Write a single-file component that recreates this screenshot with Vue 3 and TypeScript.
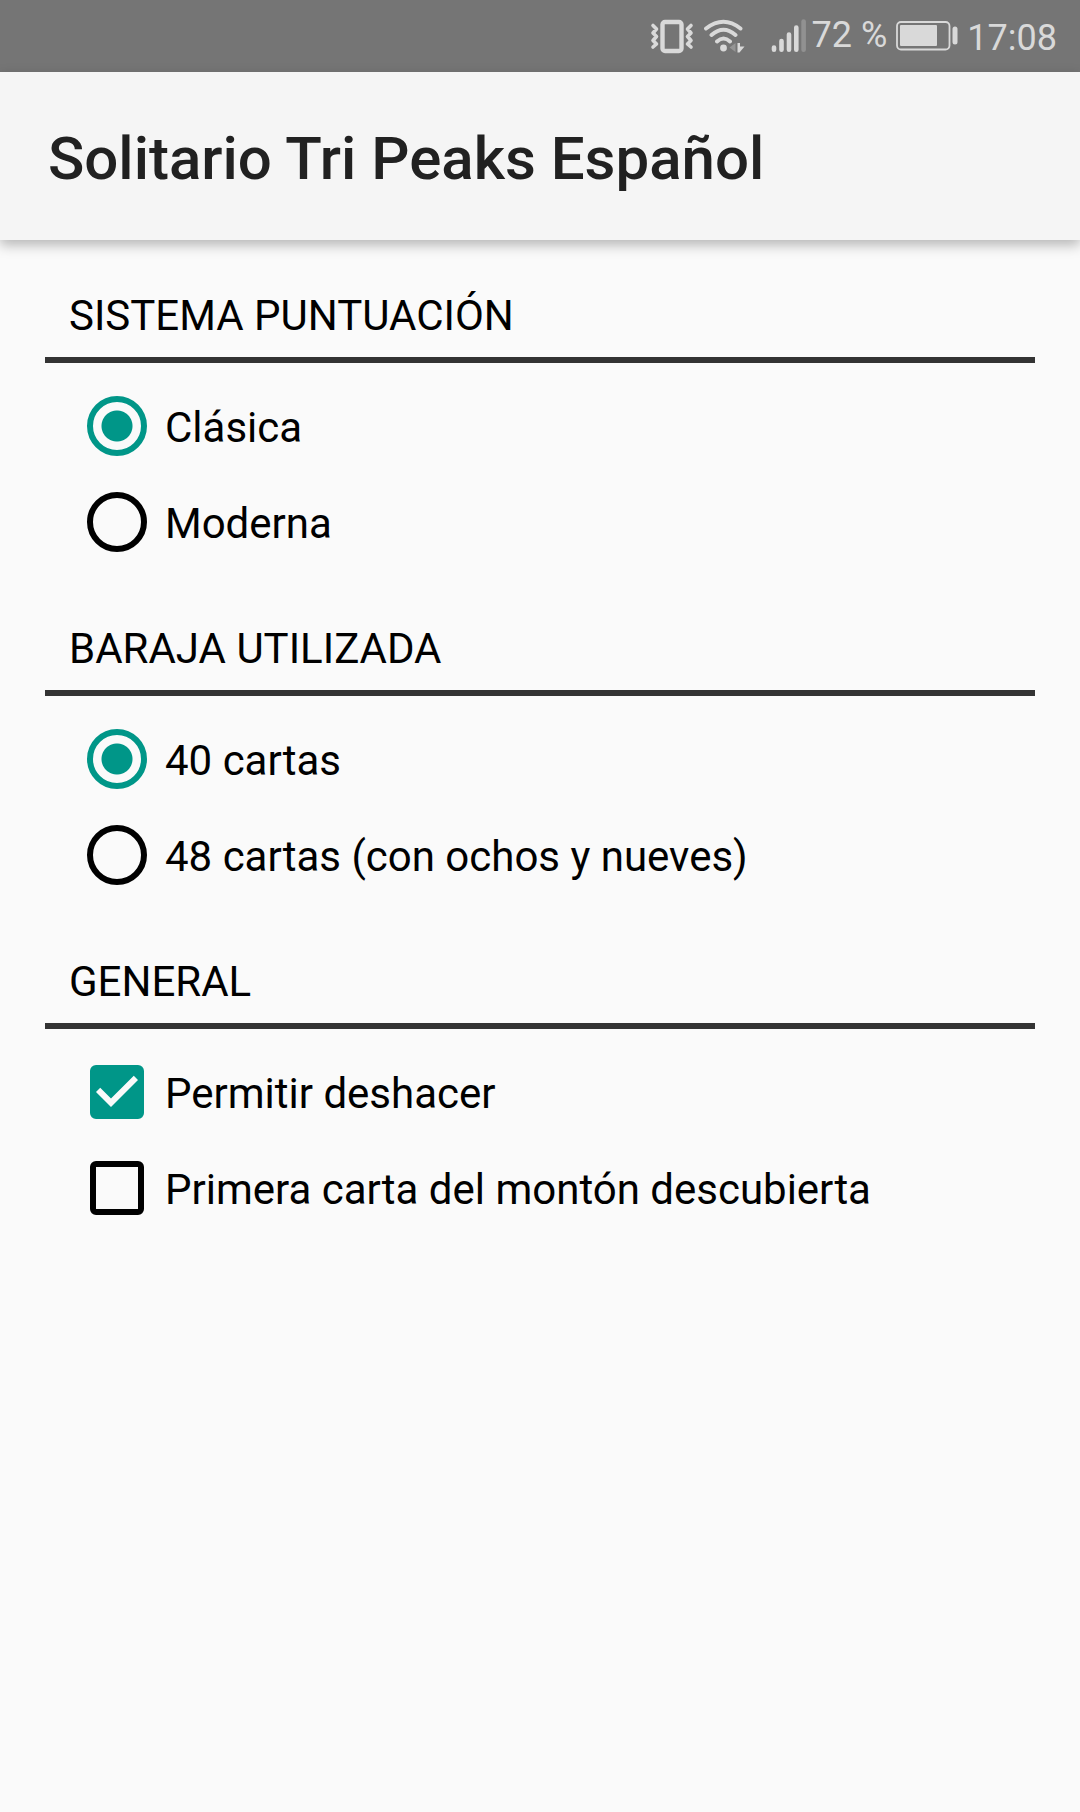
<script setup lang="ts">
import { reactive } from 'vue'

interface Option {
  id: string
  label: string
}

interface RadioSection {
  name: 'scoring' | 'deck'
  title: string
  options: Option[]
}

interface Toggle {
  key: 'undo' | 'firstCard'
  label: string
}

const radioSections: RadioSection[] = [
  {
    name: 'scoring',
    title: 'SISTEMA PUNTUACIÓN',
    options: [
      { id: 'classic', label: 'Clásica' },
      { id: 'modern', label: 'Moderna' },
    ],
  },
  {
    name: 'deck',
    title: 'BARAJA UTILIZADA',
    options: [
      { id: 'cards40', label: '40 cartas' },
      { id: 'cards48', label: '48 cartas (con ochos y nueves)' },
    ],
  },
]

const toggles: Toggle[] = [
  { key: 'undo', label: 'Permitir deshacer' },
  { key: 'firstCard', label: 'Primera carta del montón descubierta' },
]

const settings = reactive({
  scoring: 'classic',
  deck: 'cards40',
  undo: true,
  firstCard: false,
})
</script>

<template>
  <div class="screen">
    <div class="status-bar">
      <svg class="vibrate" width="44" height="36" viewBox="0 0 44 36" fill="none" aria-hidden="true">
        <rect x="12.500" y="4" width="19" height="29" rx="2.500" stroke="currentColor" stroke-width="4.400" />
        <path
          d="M3 7.500l3.500 3.500-3.500 4 3.500 3.500-3.500 4 3.500 3.500-3.500 3M41 7.500l-3.500 3.500 3.500 4-3.500 3.500 3.500 4-3.500 3.500 3.500 3"
          stroke="currentColor"
          stroke-width="3.600"
          stroke-linecap="round"
          stroke-linejoin="round"
        />
      </svg>
      <svg class="wifi" width="42" height="36" viewBox="0 0 42 36" fill="none" aria-hidden="true">
        <path
          d="M3 10.500Q20.500 -3 37.500 10.500M8.500 17Q20.500 6.500 32.500 17M14 23.500Q20.500 17.500 27 23.500"
          stroke="currentColor"
          stroke-width="3.900"
          stroke-linecap="round"
        />
        <circle cx="20.500" cy="30" r="3.400" fill="currentColor" />
        <path d="M32.500 25v9l-6-4.500z" fill="#959595" />
        <path d="M34.500 25h2.500v3.500h4.500l-5 6h-2z" fill="currentColor" />
      </svg>
      <svg class="signal" width="36" height="36" viewBox="0 0 36 36" fill="none" stroke-width="4.600" stroke-linecap="round" aria-hidden="true">
        <path d="M3 29.500v2.300M10.500 23v8.800M18 16.500v15.300M25.300 9.500v22.300" stroke="currentColor" />
        <path d="M32.600 3.500v28.300" stroke="#919191" />
      </svg>
      <span class="battery-level">72 %</span>
      <svg class="battery" width="62" height="36" viewBox="0 0 62 36" fill="none" aria-hidden="true">
        <rect x="1" y="4" width="52.500" height="27.500" rx="4" stroke="currentColor" stroke-width="1.800" />
        <rect x="4" y="7" width="37" height="21" rx="1" fill="currentColor" />
        <rect x="56.500" y="8.500" width="5" height="18" rx="2.500" fill="currentColor" />
      </svg>
      <time class="clock">17:08</time>
    </div>

    <header class="app-bar">
      <h1>Solitario Tri Peaks Español</h1>
    </header>

    <main class="content">
      <section v-for="section in radioSections" :key="section.name" class="section">
        <h2 :id="section.name">{{ section.title }}</h2>
        <div class="options" role="radiogroup" :aria-labelledby="section.name">
          <label v-for="option in section.options" :key="option.id" class="row">
            <span class="control">
              <input v-model="settings[section.name]" class="radio" type="radio" :name="section.name" :value="option.id" />
            </span>
            <span class="label">{{ option.label }}</span>
          </label>
        </div>
      </section>

      <section class="section">
        <h2>GENERAL</h2>
        <div class="options">
          <label v-for="toggle in toggles" :key="toggle.key" class="row">
            <span class="control">
              <input v-model="settings[toggle.key]" class="checkbox" type="checkbox" />
              <svg v-if="settings[toggle.key]" class="tick" width="54" height="54" viewBox="3 3 18 18" aria-hidden="true">
                <path d="M10 17l-5-5 1.410-1.410L10 14.170l7.590-7.590L19 8z" fill="#fafafa" />
              </svg>
            </span>
            <span class="label">{{ toggle.label }}</span>
          </label>
        </div>
      </section>
    </main>
  </div>
</template>

<style>
body {
  background: #fafafa;
}
</style>

<style scoped>
.screen {
  min-height: 100vh;
  background: #fafafa;
  color: #000;
  font-family: Roboto, sans-serif;
  font-size: 42px;
}

.status-bar {
  display: flex;
  align-items: center;
  justify-content: flex-end;
  height: 72px;
  padding-right: 23px;
  background: #757575;
  color: #d9d9d9;
  font-size: 36px;
  line-height: 42px;
}

.status-bar svg {
  flex: none;
}

.wifi {
  margin-left: 9px;
}

.signal {
  margin-left: 26px;
}

.battery-level {
  margin-left: 5px;
  padding-bottom: 2px;
}

.battery {
  margin-left: 9px;
}

.clock {
  margin-left: 9px;
  padding-top: 4px;
}

.app-bar {
  display: flex;
  align-items: center;
  height: 168px;
  padding: 0 48px;
  box-sizing: border-box;
  background: #f5f5f5;
  box-shadow: 0 5px 12px rgba(0, 0, 0, 0.28);
}

h1 {
  margin: 0;
  padding-top: 6px;
  color: #212121;
  font-size: 60px;
  font-weight: 500;
  line-height: 70px;
}

.content {
  padding: 33px 45px;
}

.section {
  margin-bottom: 36px;
}

h2 {
  margin: 0;
  padding: 19px 24px 17px;
  border-bottom: 6px solid #333;
  font-size: 42px;
  font-weight: 400;
  line-height: 48px;
}

.options {
  padding: 15px 24px 0;
}

.row {
  display: flex;
  align-items: center;
  min-height: 96px;
}

.control {
  display: grid;
  flex: none;
  place-items: center;
  width: 96px;
  height: 96px;
}

.control > * {
  grid-area: 1 / 1;
}

.radio,
.checkbox {
  appearance: none;
  box-sizing: border-box;
  margin: 0;
  border: 6px solid #000;
}

.radio {
  width: 60px;
  height: 60px;
  border-radius: 50%;
}

.radio:checked {
  border-color: #009688;
  background: radial-gradient(circle closest-side, #009688 15px, transparent 16px);
}

.checkbox {
  width: 54px;
  height: 54px;
  border-radius: 6px;
}

.checkbox:checked {
  border-color: #009688;
  background: #009688;
}

.tick {
  pointer-events: none;
}

.label {
  padding-top: 4px;
  line-height: 48px;
}
</style>
